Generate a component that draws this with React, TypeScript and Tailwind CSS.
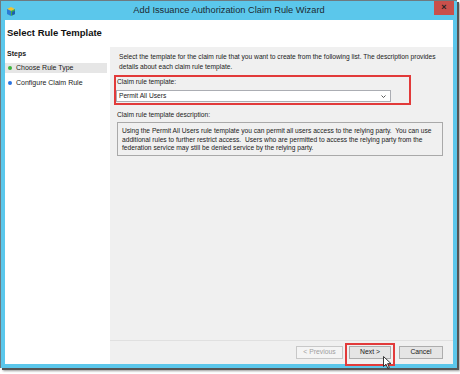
import React from "react";

const font = { fontFamily: '"Liberation Sans", Arial, sans-serif' };

function AppIcon() {
  return (
    <svg width="11" height="11" viewBox="0 0 11 11">
      <path d="M1 3 L5 1 L9 3 L5 5 Z" fill="#f2c230" />
      <path d="M1 3 L5 5 L5 10 L1 8 Z" fill="#2a7bd6" />
      <path d="M5 5 L9 3 L9 8 L5 10 Z" fill="#3fae49" />
      <path d="M6 6 L9 4.5 L9 8 L6 9.5 Z" fill="#1f5fb0" />
    </svg>
  );
}

function Cursor() {
  return (
    <svg width="9" height="13" viewBox="0 0 9 13">
      <path d="M0.5 0.5 L0.5 10.5 L3 8.2 L4.8 12.3 L6.3 11.6 L4.6 7.6 L8 7.6 Z" fill="#fff" stroke="#222" strokeWidth="0.9" strokeLinejoin="round" />
    </svg>
  );
}

export default function App() {
  return (
    <div className="w-[460px] h-[374px] bg-white relative overflow-hidden text-[#1a1a1a]" style={font}>
      {/* WINDOW */}
      <div className="w-[457px] h-[368px] flex flex-col bg-[#5bc7eb] border-l border-t border-[#6e7a80] shadow-[2px_2px_0_#555,3px_3px_2px_#9a9a9a]">

        {/* TITLE BAR */}
        <div className="h-[19px] flex items-center">
          <div className="ml-[5px] mt-[1px]">
            <AppIcon />
          </div>
          <div className="flex-1 text-center text-[9.25px] text-[#1c2b33] pl-[7px]">
            Add Issuance Authorization Claim Rule Wizard
          </div>
          <div className="self-start w-[20px] h-[14px] mr-[3px] bg-[#c9504b] flex items-center justify-center text-[9px] font-bold text-[#222]">
            ×
          </div>
        </div>

        {/* CLIENT AREA */}
        <div className="flex-1 mx-[4px] mb-[4px] flex flex-col bg-white">
          <div className="h-[27px] flex items-center pl-[2px] text-[9.5px] font-bold text-[#111]">
            Select Rule Template
          </div>

          <div className="flex-1 flex">
            {/* STEPS */}
            <div className="w-[105px] pt-[2px] text-[7px] leading-[10px]">
              <div className="pl-[2px] font-bold">Steps</div>
              <div className="mt-[4px] mr-[3px] h-[10px] bg-[#e6e6e6] flex items-center">
                <span className="ml-[3px] w-[4px] h-[4px] rounded-full bg-[#3cb43c]" />
                <span className="ml-[4px]">Choose Rule Type</span>
              </div>
              <div className="mt-[5px] h-[10px] flex items-center">
                <span className="ml-[3px] w-[4px] h-[4px] rounded-full bg-[#2b73e0]" />
                <span className="ml-[4px]">Configure Claim Rule</span>
              </div>
            </div>

            {/* MAIN PANEL */}
            <div className="flex-1 bg-[#f0f0f0] flex flex-col">
              <div className="flex-1 px-[4px] pt-[5px] text-[6.65px] leading-[10px]">
                <p className="pl-[5px] whitespace-nowrap">
                  Select the template for the claim rule that you want to create from the following list. The description provides
                  <br />
                  details about each claim rule template.
                </p>

                <div className="mt-[3px] w-[297px] border-2 border-[#e23a3a] pb-[1px]">
                  <div className="pl-[1px]">Claim rule template:</div>
                  <div className="mt-[3px] w-[275px] h-[12px] bg-white border border-[#abadb3] flex items-center justify-between pl-[2px] pr-[4px]">
                    <span>Permit All Users</span>
                    <svg width="5" height="3" viewBox="0 0 5 3">
                      <path d="M0.5 0.5 L2.5 2.5 L4.5 0.5" fill="none" stroke="#444" strokeWidth="0.9" />
                    </svg>
                  </div>
                </div>

                <div className="mt-[5px] pl-[3px]">Claim rule template description:</div>
                <div className="mt-[2px] ml-[3px] w-[326px] border border-[#a9a9a9] bg-[#f0f0f0] pl-[4px] pt-[4px] pb-[2px] leading-[8.5px] whitespace-pre">
                  Using the Permit All Users rule template you can permit all users access to the relying party.  You can use
                  {"\n"}additional rules to further restrict access.  Users who are permitted to access the relying party from the
                  {"\n"}federation service may still be denied service by the relying party.
                </div>
              </div>

              {/* BUTTON BAR */}
              <div className="h-[24px] border-t border-[#e0e0e0] flex items-center justify-end pr-[10px] text-[6.8px]">
                <div className="w-[47px] h-[13px] border border-[#c8c8c8] bg-[#f4f4f4] text-[#a0a0a0] flex items-center justify-center">
                  &lt; Previous
                </div>
                <div className="ml-[6px] w-[42px] h-[13px] border border-[#adadad] bg-[#e5e5e5] flex items-center justify-center">
                  Next &gt;
                </div>
                <div className="ml-[8px] w-[44px] h-[13px] border border-[#adadad] bg-[#e5e5e5] flex items-center justify-center">
                  Cancel
                </div>
              </div>
            </div>
          </div>
        </div>
      </div>

      {/* ANNOTATION: red box around Next, and cursor */}
      <div className="absolute left-[345px] top-[343px] w-[50px] h-[23px] border-2 border-[#e23a3a]" />
      <div className="absolute left-[383px] top-[356px]">
        <Cursor />
      </div>
    </div>
  );
}
